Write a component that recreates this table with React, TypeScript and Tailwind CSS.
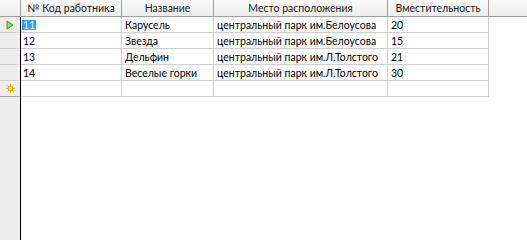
const columns = [
  { title: '№ Код работника', width: 'w-[101px]' },
  { title: 'Название', width: 'w-[92px]' },
  { title: 'Место расположения', width: 'w-[174px]' },
  { title: 'Вместительность', width: 'w-[101px]' },
]

const rows = [
  ['11', 'Карусель', 'центральный парк им.Белоусова', '20'],
  ['12', 'Звезда', 'центральный парк им.Белоусова', '15'],
  ['13', 'Дельфин', 'центральный парк им.Л.Толстого', '21'],
  ['14', 'Веселые горки', 'центральный парк им.Л.Толстого', '30'],
]

const CurrentRowIcon = () => (
  <svg width="8" height="10" viewBox="0 0 8 10">
    <path d="M1 1 L7 5 L1 9 Z" fill="#9be04a" stroke="#3a9a1a" strokeWidth="1" />
  </svg>
)

const NewRowIcon = () => (
  <svg width="9" height="9" viewBox="0 0 9 9">
    <g stroke="#f0b400" strokeWidth="1">
      <line x1="4.5" y1="0" x2="4.5" y2="9" />
      <line x1="0" y1="4.5" x2="9" y2="4.5" />
      <line x1="1.5" y1="1.5" x2="7.5" y2="7.5" />
      <line x1="7.5" y1="1.5" x2="1.5" y2="7.5" />
    </g>
    <circle cx="4.5" cy="4.5" r="2.3" fill="#ffe066" stroke="#f0a000" strokeWidth="0.8" />
  </svg>
)

const App: React.FC = () => {
  return (
    <div
      className="flex w-[527px] h-[240px] bg-white text-[10.5px] leading-none text-black overflow-hidden whitespace-nowrap"
      style={{ fontFamily: 'Lato, "Liberation Sans", sans-serif' }}
    >
      {/* row selector column */}
      <div className="flex flex-col w-[21px] shrink-0">
        <div className="h-[17px] border-r border-b border-[#a0a0a0] bg-gradient-to-b from-[#fbfbfb] to-[#ececec]" />
        <div className="flex-1 flex flex-col bg-[#ededed] border-r border-black">
          {rows.map((r, i) => (
            <div key={r[0]} className="h-[16px] border-b border-[#cfcfcf] flex items-center justify-center">
              {i === 0 && <CurrentRowIcon />}
            </div>
          ))}
          <div className="h-[16px] border-b border-[#a8a8a8] flex items-center justify-center">
            <NewRowIcon />
          </div>
        </div>
      </div>

      {/* grid */}
      <div className="flex-1 flex flex-col">
        <div className="flex h-[17px] border-b border-[#a0a0a0] bg-gradient-to-b from-[#fbfbfb] to-[#ececec]">
          {columns.map((c) => (
            <div
              key={c.title}
              className={`${c.width} shrink-0 border-r border-[#a0a0a0] flex items-center justify-center text-[#1a1a1a]`}
            >
              {c.title}
            </div>
          ))}
          <div className="flex-1" />
        </div>
        {rows.map((r, i) => (
          <div key={r[0]} className="flex h-[16px]">
            {r.map((v, j) => (
              <div
                key={j}
                className={`${columns[j].width} shrink-0 border-r border-b border-[#cfcfcf] flex items-center pl-[1px] pt-[1px] overflow-hidden`}
              >
                {i === 0 && j === 0 ? (
                  <span className="bg-[#3399ff] text-white px-[1px]">{v}</span>
                ) : (
                  <span className={j === 0 ? 'px-[1px]' : 'px-[2px]'}>{v}</span>
                )}
              </div>
            ))}
          </div>
        ))}
        <div className="flex h-[16px]">
          {columns.map((c) => (
            <div key={c.title} className={`${c.width} shrink-0 border-r border-b border-[#cfcfcf]`} />
          ))}
        </div>
      </div>
    </div>
  )
}

export default App
